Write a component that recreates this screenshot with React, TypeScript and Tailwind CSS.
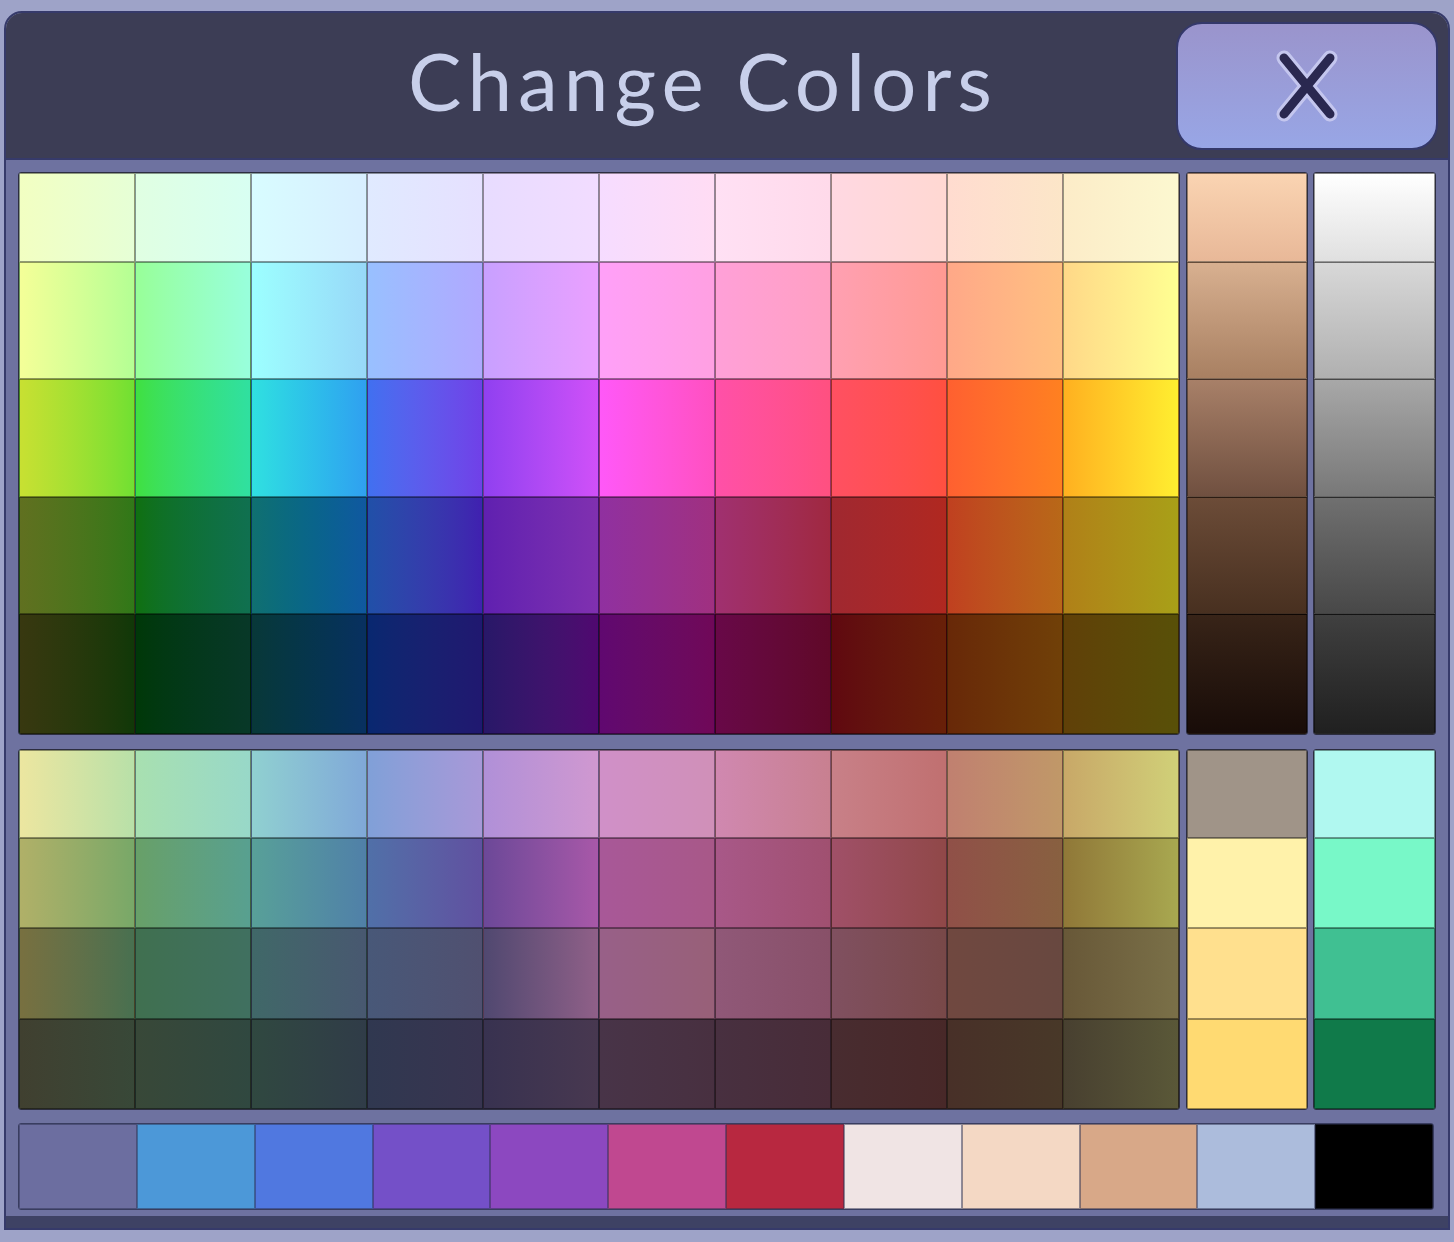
const topRows: { h: string; cells: string[] }[] = [
  {
    h: "h-[89px]",
    cells: [
      "from-[#f2ffc2] to-[#e6ffd6]",
      "from-[#e0ffe2] to-[#d8fff2]",
      "from-[#d8fcff] to-[#d8eeff]",
      "from-[#e0eaff] to-[#e6e0ff]",
      "from-[#e8dcff] to-[#f2dcff]",
      "from-[#f6dcff] to-[#ffdcf4]",
      "from-[#ffe0f4] to-[#ffdaea]",
      "from-[#ffd8e2] to-[#ffd8d2]",
      "from-[#ffdcd0] to-[#fce6c8]",
      "from-[#fcecc8] to-[#fcf8d0]",
    ],
  },
  {
    h: "h-[117px]",
    cells: [
      "from-[#f4ff98] to-[#b4ff94]",
      "from-[#98ff98] to-[#98ffdc]",
      "from-[#9cffff] to-[#98d8f8]",
      "from-[#98c0ff] to-[#b0a8ff]",
      "from-[#c8a0ff] to-[#eaa0ff]",
      "from-[#ffa0f8] to-[#ffa0e2]",
      "from-[#ffa0d8] to-[#ffa0c2]",
      "from-[#ffa0b2] to-[#ff9a92]",
      "from-[#ffa888] to-[#ffc080]",
      "from-[#ffd888] to-[#ffff92]",
    ],
  },
  {
    h: "h-[118px]",
    cells: [
      "from-[#c8e032] to-[#70e032]",
      "from-[#40e040] to-[#30e0a0]",
      "from-[#30e0e0] to-[#30a0f0]",
      "from-[#4070f0] to-[#7040e8]",
      "from-[#9040f0] to-[#d050f8]",
      "from-[#ff58f8] to-[#ff50c0]",
      "from-[#ff50a8] to-[#ff5080]",
      "from-[#ff5062] to-[#ff5040]",
      "from-[#ff6030] to-[#ff8020]",
      "from-[#ffb020] to-[#ffee30]",
    ],
  },
  {
    h: "h-[117px]",
    cells: [
      "from-[#607020] to-[#307818]",
      "from-[#107010] to-[#107050]",
      "from-[#107070] to-[#1058a0]",
      "from-[#2050a8] to-[#4020b0]",
      "from-[#6020b0] to-[#8030b0]",
      "from-[#9030a0] to-[#a03080]",
      "from-[#a03070] to-[#a02840]",
      "from-[#a02830] to-[#b02820]",
      "from-[#c04020] to-[#b86818]",
      "from-[#b08018] to-[#a8a018]",
    ],
  },
  {
    h: "h-[120px]",
    cells: [
      "from-[#383810] to-[#103808]",
      "from-[#003808] to-[#083828]",
      "from-[#083838] to-[#083060]",
      "from-[#082870] to-[#201870]",
      "from-[#281868] to-[#500870]",
      "from-[#600870] to-[#700858]",
      "from-[#680848] to-[#600828]",
      "from-[#600810] to-[#682008]",
      "from-[#682808] to-[#704008]",
      "from-[#604008] to-[#585008]",
    ],
  },
];

const browns = [
  "from-[#fad4b2] to-[#e8b898]",
  "from-[#d8b090] to-[#a88062]",
  "from-[#a88068] to-[#705040]",
  "from-[#6c4c38] to-[#483020]",
  "from-[#382418] to-[#180c08]",
];

const grays = [
  "from-[#ffffff] to-[#e0e0e0]",
  "from-[#d8d8d8] to-[#b0b0b0]",
  "from-[#a8a8a8] to-[#787878]",
  "from-[#707070] to-[#484848]",
  "from-[#404040] to-[#202020]",
];

const lowRows: { h: string; cells: string[] }[] = [
  {
    h: "h-[88px]",
    cells: [
      "from-[#ece6a0] to-[#b8e0a8]",
      "from-[#a8e0b0] to-[#98d8c8]",
      "from-[#90d0d0] to-[#80a8d8]",
      "from-[#80a0d8] to-[#a898d8]",
      "from-[#b090d8] to-[#d098d0]",
      "from-[#d090c8] to-[#d090b8]",
      "from-[#d088b0] to-[#c88090]",
      "from-[#c88088] to-[#c07070]",
      "from-[#c08070] to-[#c09868]",
      "from-[#c8a868] to-[#d0d078]",
    ],
  },
  {
    h: "h-[90px]",
    cells: [
      "from-[#b0b068] to-[#78a868]",
      "from-[#68a068] to-[#58a090]",
      "from-[#58a098] to-[#5080a8]",
      "from-[#5070a8] to-[#6050a0]",
      "from-[#6c4898] to-[#a858a8]",
      "from-[#a85898] to-[#a85888]",
      "from-[#a85888] to-[#a05070]",
      "from-[#a05068] to-[#904848]",
      "from-[#905048] to-[#886040]",
      "from-[#907838] to-[#a8a850]",
    ],
  },
  {
    h: "h-[91px]",
    cells: [
      "from-[#787040] to-[#487050]",
      "from-[#407050] to-[#407060]",
      "from-[#406868] to-[#485870]",
      "from-[#485878] to-[#505070]",
      "from-[#504870] to-[#906088]",
      "from-[#986088] to-[#986078]",
      "from-[#905878] to-[#885068]",
      "from-[#805060] to-[#784848]",
      "from-[#704840] to-[#684840]",
      "from-[#685838] to-[#7a7048]",
    ],
  },
  {
    h: "h-[90px]",
    cells: [
      "from-[#404030] to-[#384838]",
      "from-[#384838] to-[#304840]",
      "from-[#304840] to-[#303c48]",
      "from-[#303850] to-[#383450]",
      "from-[#383250] to-[#483850]",
      "from-[#483448] to-[#483040]",
      "from-[#483040] to-[#482c38]",
      "from-[#482c30] to-[#482828]",
      "from-[#483028] to-[#483828]",
      "from-[#484030] to-[#5a5838]",
    ],
  },
];

const creams = ["bg-[#a09488]", "bg-[#fff2aa]", "bg-[#ffe08e]", "bg-[#ffda72]"];
const mints = ["bg-[#b0f8f0]", "bg-[#78f8c8]", "bg-[#40c092]", "bg-[#107a4a]"];

const swatches = [
  "bg-[#6c6ea0]",
  "bg-[#4c98d8]",
  "bg-[#5078e0]",
  "bg-[#7450c8]",
  "bg-[#8c48c0]",
  "bg-[#c04890]",
  "bg-[#b82840]",
  "bg-[#f0e4e4]",
  "bg-[#f4d8c4]",
  "bg-[#d8a888]",
  "bg-[#acbcdc]",
  "bg-[#000000]",
];

const topHeights = topRows.map((r) => r.h);
const lowHeights = lowRows.map((r) => r.h);

function Column({ cells, heights, dir }: { cells: string[]; heights: string[]; dir: "b" | "solid" }) {
  return (
    <div className="flex flex-col overflow-hidden rounded-[3px] border border-black/60">
      {cells.map((c, i) => (
        <div
          key={i}
          className={`${heights[i]} border border-black/40 ${dir === "b" ? "bg-linear-to-b" : ""} ${c}`}
        />
      ))}
    </div>
  );
}

function Block({ rows }: { rows: { h: string; cells: string[] }[] }) {
  return (
    <div className="flex flex-col overflow-hidden rounded-[3px] border border-black/60">
      {rows.map((r, i) => (
        <div key={i} className={`grid grid-cols-10 ${r.h}`}>
          {r.cells.map((c, j) => (
            <div key={j} className={`border border-black/40 bg-linear-to-r ${c}`} />
          ))}
        </div>
      ))}
    </div>
  );
}

export default function App() {
  return (
    <div className="min-h-screen w-full bg-[#9ea3c8] pt-[11px] px-[4px] pb-[14px]">
      <div className="rounded-t-[18px] border-2 border-[#363a6a] overflow-hidden">
        {/* header */}
        <div className="flex items-center h-[147px] bg-[#3c3d55] border-b-2 border-[#363a6a] pr-[10px]">
          <h1 className="flex-1 pl-[224px] mb-[12px] text-center text-[80px] leading-none tracking-[6px] text-[#c8cfea] font-['Lato',sans-serif]">
            Change Colors
          </h1>
          <button className="w-[262px] h-[128px] rounded-[26px] border-2 border-[#34386a] bg-linear-to-b from-[#9a94cc] to-[#98a6e6] flex items-center justify-center">
            <svg width="70" height="76" viewBox="0 0 70 76">
              <g strokeLinecap="round" fill="none">
                <path d="M12 10 L58 66 M58 10 L12 66" stroke="#c4c6ee" strokeWidth="15" />
                <path d="M12 10 L58 66 M58 10 L12 66" stroke="#2a2850" strokeWidth="9" />
              </g>
            </svg>
          </button>
        </div>

        {/* body */}
        <div className="bg-[#6e72a0] px-[12px] pt-[12px] pb-[6px]">
          <div className="flex">
            <div className="flex-1">
              <Block rows={topRows} />
            </div>
            <div className="w-[122px] ml-[6px]">
              <Column cells={browns} heights={topHeights} dir="b" />
            </div>
            <div className="w-[123px] ml-[5px]">
              <Column cells={grays} heights={topHeights} dir="b" />
            </div>
          </div>

          <div className="flex mt-[14px]">
            <div className="flex-1">
              <Block rows={lowRows} />
            </div>
            <div className="w-[122px] ml-[6px]">
              <Column cells={creams} heights={lowHeights} dir="solid" />
            </div>
            <div className="w-[123px] ml-[5px]">
              <Column cells={mints} heights={lowHeights} dir="solid" />
            </div>
          </div>

          <div className="mt-[13px] mr-[2px] grid grid-cols-12 h-[87px] rounded-[3px] overflow-hidden border border-[#2c3050]/80">
            {swatches.map((s, i) => (
              <div key={i} className={`border border-[#2c3050]/50 ${s}`} />
            ))}
          </div>
        </div>
        <div className="h-[12px] bg-[#3e4264]" />
      </div>
    </div>
  );
}
